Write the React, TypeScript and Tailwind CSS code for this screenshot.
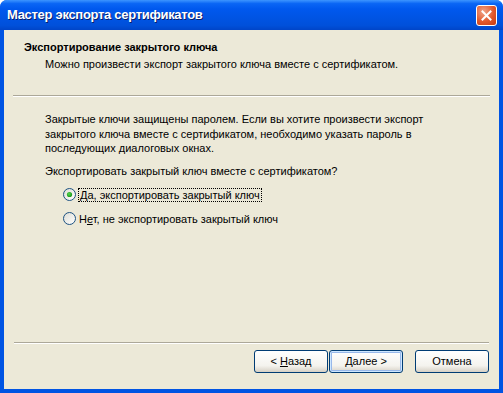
const FONT = { fontFamily: '"Liberation Sans", Arial, sans-serif' };

function Radio({ checked }: { checked?: boolean }) {
  return (
    <svg width="13" height="13" viewBox="0 0 13 13" className="shrink-0">
      <defs>
        <linearGradient id="rg" x1="0" y1="0" x2="1" y2="1">
          <stop offset="0" stopColor="#dcdcd4" />
          <stop offset="1" stopColor="#ffffff" />
        </linearGradient>
        <radialGradient id="dot" cx="0.4" cy="0.4" r="0.6">
          <stop offset="0" stopColor="#55d451" />
          <stop offset="1" stopColor="#1a9a1a" />
        </radialGradient>
      </defs>
      <circle cx="6.5" cy="6.5" r="6" fill="url(#rg)" stroke="#1c5180" strokeWidth="1" />
      {checked && <circle cx="6.5" cy="6.5" r="2.6" fill="url(#dot)" />}
    </svg>
  );
}

function Button({ children, primary }: { children: React.ReactNode; primary?: boolean }) {
  return (
    <button
      className={
        "w-[74px] h-[23px] rounded-[3px] border border-[#003c74] text-[11px] text-black flex items-center justify-center bg-[linear-gradient(#ffffff,#f4f3ee_70%,#d6d0c5)] " +
        (primary ? "shadow-[inset_0_0_0_1px_#cee7ff,inset_0_0_0_2px_#98b8ea]" : "")
      }
      style={FONT}
    >
      {children}
    </button>
  );
}

export default function App() {
  return (
    <div
      className="w-[503px] h-[393px] flex flex-col bg-[#0054e3] overflow-hidden rounded-t-[7px]"
      style={FONT}
    >
      <div className="h-[30px] shrink-0 flex items-center justify-between pl-[7px] pr-[6px] bg-[linear-gradient(#3d95ff,#0a66f5_12%,#0058ee_30%,#0054e3_60%,#0050da_85%,#0045c8)]">
        <span className="text-white font-bold text-[13px] tracking-[-0.3px] [text-shadow:1px_1px_0_#0a1e6a]">
          Мастер экспорта сертификатов
        </span>
        <div className="w-[21px] h-[21px] rounded-[3px] border border-white bg-[radial-gradient(circle_at_35%_30%,#f0a58a,#e2582c_55%,#c53a12)] flex items-center justify-center">
          <svg width="11" height="11" viewBox="0 0 11 11">
            <path d="M1.5 1.5 L9.5 9.5 M9.5 1.5 L1.5 9.5" stroke="white" strokeWidth="2" strokeLinecap="square" />
          </svg>
        </div>
      </div>

      <div className="flex-1 mx-[4px] mb-[4px] bg-[#ece9d8] flex flex-col text-[11px] text-black">
        <div className="pl-[20px] pt-[10px] h-[65px]">
          <div className="font-bold leading-[14px]">Экспортирование закрытого ключа</div>
          <div className="pl-[21px] pt-[3px] leading-[14px]">
            Можно произвести экспорт закрытого ключа вместе с сертификатом.
          </div>
        </div>
        <div className="mx-[9px] border-t border-[#aca899] border-b border-b-white" />

        <div className="pl-[41px] pt-[15px] flex-1">
          <p className="leading-[14.5px] w-[400px]">
            Закрытые ключи защищены паролем. Если вы хотите произвести экспорт закрытого ключа
            вместе с сертификатом, необходимо указать пароль в последующих диалоговых окнах.
          </p>
          <p className="pt-[8px] leading-[14px]">Экспортировать закрытый ключ вместе с сертификатом?</p>
          <div className="pl-[18px] pt-[10px] flex flex-col gap-[10px]">
            <label className="flex items-center gap-[2px] h-[14px]">
              <Radio checked />
              <span className="border border-dotted border-black px-[1px] leading-[12px]">
                <u>Д</u>а, экспортировать закрытый ключ
              </span>
            </label>
            <label className="flex items-center gap-[3px] h-[14px]">
              <Radio />
              <span className="leading-[12px]">
                Н<u>е</u>т, не экспортировать закрытый ключ
              </span>
            </label>
          </div>
        </div>

        <div className="mx-[10px] border-t border-[#aca899] border-b border-b-white" />
        <div className="h-[45px] flex items-start justify-end pt-[6px] pr-[10px]">
          <Button>
            &lt;&nbsp;<u>Н</u>азад
          </Button>
          <div className="ml-[1px]">
            <Button primary>
              <u>Д</u>алее&nbsp;&gt;
            </Button>
          </div>
          <div className="ml-[12px]">
            <Button>Отмена</Button>
          </div>
        </div>
      </div>
    </div>
  );
}
